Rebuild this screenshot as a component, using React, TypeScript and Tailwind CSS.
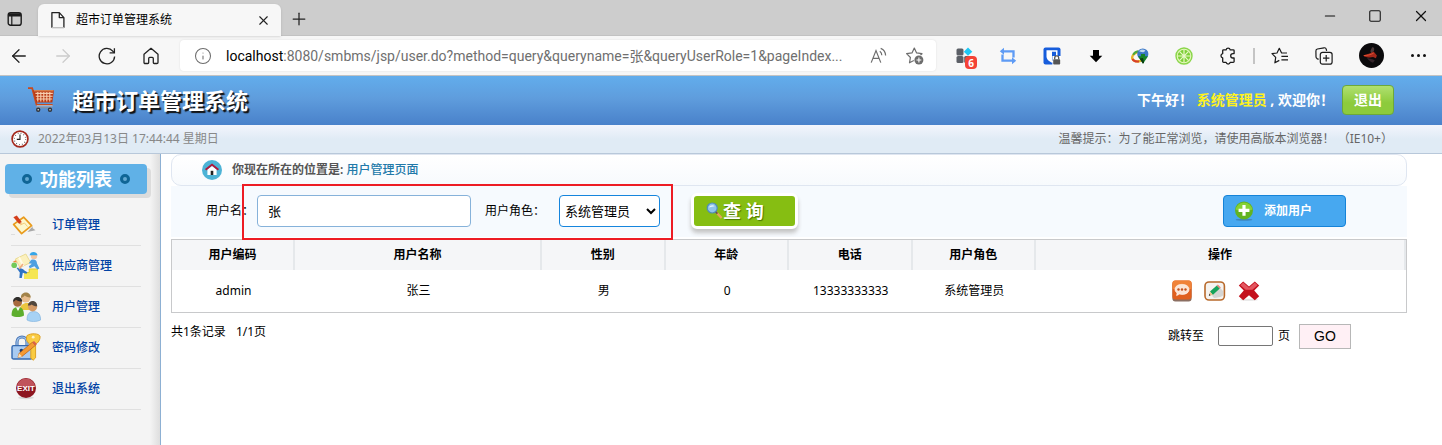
import React from 'react';
import { ArrowLeft, ArrowRight, Info, Minus, Plus, Square, X } from 'lucide-react';

const FONT = "font-['Noto_Sans','Noto_Sans_CJK_SC',sans-serif]";

type IconProps = { className?: string };

function TabsIcon() {
  return (
    <svg viewBox="0 0 16 16" className="size-4" fill="none" stroke="#1b1b1b" strokeWidth="1.4">
      <rect x="1.2" y="1.7" width="13" height="12.6" rx="2.4" />
      <path d="M1.5 3.2h12.4M1.5 4.6h12.4" strokeWidth="2" />
      <path d="M4.8 5v9" strokeWidth="1.2" />
    </svg>
  );
}

function PageIcon() {
  return (
    <svg viewBox="0 0 14 18" className="h-[18px] w-3.5" fill="none" stroke="#222" strokeWidth="1.3" strokeLinejoin="round">
      <path d="M.9 16.7V1.6h7.4l4.6 5v10.1M8.3 1.6v5h4.6" />
      <path d="M.9 16.7h12" stroke="#bbb" />
    </svg>
  );
}

function RefreshIcon() {
  return (
    <svg viewBox="0 0 18 18" className="size-[18px]" fill="none" stroke="#222" strokeWidth="1.3">
      <path d="M16.6 9.4A7.7 7.7 0 1 1 14.8 4.2L16.1 5.6" />
      <path d="M16.4 1.2v4.7h-4.8" />
    </svg>
  );
}

function HomeIcon() {
  return (
    <svg viewBox="0 0 18 18" className="size-[18px]" fill="none" stroke="#222" strokeWidth="1.3" strokeLinejoin="round">
      <path d="M2 7.3 9 1.3l7 6v8.1a1.1 1.1 0 0 1-1.1 1.1h-2.7a.9.9 0 0 1-.9-.9v-4.2a1 1 0 0 0-1-1H7.7a1 1 0 0 0-1 1v4.2a.9.9 0 0 1-.9.9H3.1A1.1 1.1 0 0 1 2 15.4z" />
    </svg>
  );
}

function ReadAloudIcon() {
  return (
    <svg viewBox="0 0 18 18" className="size-[18px]" fill="none" stroke="#6d6d6d" strokeWidth="1.2">
      <path d="M1.2 15.6 6 3.6l4.8 12M2.8 11.4h6.4" />
      <path d="M9.8 4.3a5 5 0 0 1 2 4M10.7 1.4a8 8 0 0 1 4.9 7.2" />
    </svg>
  );
}

function StarAddIcon() {
  return (
    <svg viewBox="0 0 18 18" className="size-[18px]">
      <path d="m8.3 1.1 2.3 4.8 5.4.8-3.9 3.8.9 5.3-4.7-2.5-4.8 2.5.9-5.3L.6 6.7l5.4-.8z" fill="none" stroke="#6d6d6d" strokeWidth="1.2" strokeLinejoin="round" />
      <circle cx="12.9" cy="13" r="5.2" fill="#fff" />
      <circle cx="12.9" cy="13" r="4.5" fill="#6d6d6d" />
      <path d="M12.9 10.6v4.8M10.5 13h4.8" stroke="#fff" strokeWidth="1.1" />
    </svg>
  );
}

function GridExtensionIcon() {
  return (
    <svg viewBox="0 0 17 17" className="size-[17px]">
      <rect x=".5" y="1.5" width="7" height="7" rx="1.5" fill="#5b5f66" />
      <rect x=".5" y="9" width="7" height="7" rx="1.5" fill="#5b5f66" />
      <rect x="8.2" y="9" width="7" height="7" rx="1.5" fill="#5b5f66" />
      <path d="m12 .6 4.3 4.1L12 8.8 7.8 4.7z" fill="#1ec8f5" />
    </svg>
  );
}

function SwapIcon() {
  return (
    <svg viewBox="0 0 18 18" className="size-[18px]" fill="none" stroke="#5e9bf5" strokeWidth="2.3">
      <path d="M4 4.3h10.500v6.200M14 13.700H3.500V7.500" />
      <path d="M5 .8.8 4.300 5 7.800zM13 10.200l4.200 3.500-4.200 3.500z" fill="#5e9bf5" stroke="none" />
    </svg>
  );
}

function ShieldLockIcon() {
  return (
    <svg viewBox="0 0 18 18" className="size-[18px]">
      <rect x=".5" y=".5" width="17" height="17" rx="2" fill="#175ddc" />
      <path d="M3.5 3.2h11v6.3c0 3-2.7 4.9-5.5 6.2-2.8-1.3-5.5-3.2-5.5-6.2z" fill="#fff" />
      <path d="M9 4.7h4v5c0 1.9-1.8 3.2-4 4.3z" fill="#175ddc" />
      <rect x="9.4" y="9" width="8.6" height="9" fill="#fff" />
      <rect x="10.2" y="12.2" width="7" height="5.4" rx=".8" fill="#555" />
      <path d="M11.7 12.3v-1.4a2 2 0 0 1 4 0v1.4" fill="none" stroke="#555" strokeWidth="1.3" />
    </svg>
  );
}

function DownIcon() {
  return (
    <svg viewBox="0 0 14 14" className="size-3.5">
      <path d="M4 .9h6v5.8h3.3L7 13.2.7 6.7H4z" fill="#000" />
    </svg>
  );
}

function GlobeDownIcon() {
  return (
    <svg viewBox="0 0 18 18" className="size-[18px]">
      <ellipse cx="8" cy="9.5" rx="7" ry="4.7" fill="none" stroke="#e5b52b" strokeWidth="2.4" transform="rotate(-18 8 9.5)" />
      <path d="M1.5 11.8c.8 2.2 3.5 3 6.5 2.7" fill="none" stroke="#d8402a" strokeWidth="2" />
      <path d="M2.2 7.7c1-2 3-3.2 5-3.5" fill="none" stroke="#4ba83a" strokeWidth="2" />
      <circle cx="11.8" cy="7" r="5.6" fill="#3b77c7" />
      <path d="M8 4.2c1.8-2.2 4.5-2 6.4-.8-.7 1.6-2.5 2-4 1.6z" fill="#bfd9ee" />
      <path d="M7 9.200h3V7h4v2.200h3l-5 7.600z" fill="#15822a" />
      <path d="m8.600 11.600 3.400 5.200 1-1.600-1-4.200z" fill="#083c10" />
    </svg>
  );
}

function LimeIcon() {
  return (
    <svg viewBox="0 0 18 18" className="size-[18px]">
      <circle cx="9" cy="9" r="8" fill="#e6f7bd" stroke="#8ad64a" strokeWidth="1.4" />
      <circle cx="9" cy="9" r="6.2" fill="#7ed037" />
      <path d="M9 2.5v13M2.5 9h13M4.4 4.4l9.2 9.2M13.6 4.4l-9.2 9.2" stroke="#e9f8c8" strokeWidth="1.2" />
      <circle cx="9" cy="9" r="1.2" fill="#e9f8c8" />
    </svg>
  );
}

function PuzzleIcon() {
  return (
    <svg viewBox="0 0 18 18" className="size-[18px]" fill="none" stroke="#1b1b1b" strokeWidth="1.3" strokeLinejoin="round">
      <path d="M4.600 2.800h2.500a2.100 2.100 0 0 1 4.100 0h3a.9.9 0 0 1 .9.9v2.900h-1.200a2.200 2.200 0 0 0 0 4.400h1.200v3.500a.9.9 0 0 1-.9.9h-3a2.100 2.100 0 0 1-4.100 0H4.600a.9.9 0 0 1-.9-.9v-3.600a2.200 2.200 0 0 1 0-4.300V3.700a.9.9 0 0 1 .9-.9z" />
    </svg>
  );
}

function FavoritesIcon() {
  return (
    <svg viewBox="0 0 18 18" className="size-[18px]" fill="none" stroke="#1b1b1b" strokeWidth="1.2" strokeLinejoin="round">
      <path d="M16 6H10.6L8.3 1.3 6 6l-5 .7 3.7 3.7-.8 5.4 4.4-2.4M10.4 9.4H17M10.4 12.8H17" />
    </svg>
  );
}

function CollectionsIcon() {
  return (
    <svg viewBox="0 0 18 18" className="size-[18px]" fill="none" stroke="#1b1b1b" strokeWidth="1.2" strokeLinejoin="round">
      <path d="M3.6 12.4 2 11.6A2.3 2.3 0 0 1 1 9.5L.9 4a2 2 0 0 1 1.5-2L9 .8a2 2 0 0 1 2.3 1.5l.3 1.6" />
      <rect x="5.3" y="5.3" width="11.8" height="11.8" rx="2.2" />
      <path d="M11.2 8v6.4M8 11.2h6.4" />
    </svg>
  );
}

function Avatar() {
  return (
    <svg viewBox="0 0 25 25" className="size-[25px]">
      <circle cx="12.5" cy="12.5" r="12.5" fill="#0b0a0c" />
      <path d="M13 4.5c1.5-1 2.7.5 2 3l-2.6 3.2-1-2.6z" fill="#4b3a3a" />
      <path d="M4 12.4c4-1.600 8-2 10.600-4l3.300 4.200-1 2.600-2.800-1.200c-3.400 1-7.400.4-10.100-1.600z" fill="#a5281b" />
      <path d="M8 14.8c2.8 1.3 6 1 7.8 2.7l-1.8 2.3c-2.6-.8-4.8-2.6-6-5z" fill="#34242a" />
      <path d="M5 12.6c3 0 6.4-.8 9.6-2.4" stroke="#e25534" strokeWidth=".9" fill="none" />
    </svg>
  );
}

function CartIcon() {
  return (
    <svg viewBox="0 0 26 26" className="size-[26px]">
      <path d="M0 1.2h4.2l4.4 16.6h16" fill="none" stroke="#c94a1c" strokeWidth="1.8" />
      <path d="M8.6 18.8h16" stroke="#bcc4cc" strokeWidth="1.2" />
      <path d="M5 3.2h21l-1.6 12.4H8.2z" fill="#b93a16" />
      <path d="M6 3.8h19.4" stroke="#e28b52" strokeWidth="1.2" />
      <path d="M7.4 6.4h17.4M7.8 9.2h16.8M8.4 12h15.8M9.8 5v9.6M12.8 5v9.6M15.8 5v9.6M18.8 5v9.6M21.8 5v9.6" stroke="#f7cfae" strokeWidth="1.1" />
      <path d="M8 20.6h16" stroke="#8892a0" strokeWidth="1.4" />
      <circle cx="10.2" cy="22.8" r="2.2" fill="#303640" />
      <circle cx="22" cy="22.8" r="2.2" fill="#303640" />
      <circle cx="10.2" cy="22.8" r=".8" fill="#ddd" />
      <circle cx="22" cy="22.8" r=".8" fill="#ddd" />
    </svg>
  );
}

function ClockIcon() {
  return (
    <svg viewBox="0 0 18 18" className="size-[18px]">
      <circle cx="9" cy="9" r="7.9" fill="#fff" stroke="#a4281c" strokeWidth="1.7" />
      <circle cx="9" cy="9" r="5.7" fill="none" stroke="#555" strokeWidth="1.2" strokeDasharray=".8 2.180" />
      <path d="M9 4.4v5H5.8" fill="none" stroke="#222" strokeWidth="1.1" />
    </svg>
  );
}

function OrderIcon() {
  return (
    <svg viewBox="0 0 30 30" className="size-[30px]">
      <path d="M16 22.5 22 16l-.5 2 3 2.200-8 1.800z" fill="#a9a9a9" />
      <path d="M0 24.500h4M25 24.500h5" stroke="#ddd" />
      <path d="m2.600 14.400 10-7.200 8 8.400L10.600 23.600z" fill="#fdf7cb" stroke="#e99b1d" strokeWidth="1.7" strokeLinejoin="round" />
      <path d="m9 15 4.500-2 3 3.600" fill="none" stroke="#f4cf7a" strokeWidth="1" />
      <path d="m2.400 7.200 3.400-1.800 4.600 6.200.2 2.600-2.800-.8z" fill="#d43d1a" />
      <path d="m8.600 13.300 2.200-1.500.4 2.600z" fill="#f7d29a" />
    </svg>
  );
}

function SupplierIcon() {
  return (
    <svg viewBox="0 0 30 30" className="size-[30px]">
      <path d="M13 28V21.5h5V18h9v10z" fill="#f5e653" />
      <path d="M13 21.6h5.2V18H27" fill="none" stroke="#e1c72f" />
      <path d="m4.4 8 10.4-5 4.8 8.5L9 16.6z" fill="#fbf0bd" stroke="#eadb93" />
      <path d="m8 6.4 4.6 8.5" stroke="#fffbe6" strokeWidth="2" />
      <circle cx="23" cy="5" r="3.2" fill="#f4c5a0" />
      <path d="M18.6 4.2c.3-4 6.8-4.8 8 0z" fill="#35a5e8" />
      <path d="M20 9c3.5-1.4 6 .4 6 3.4l2.4 5-2 1-3-3.2-4.6 2-1-2 3-2.4-3-.6z" fill="#4d9fe0" />
      <circle cx="3.2" cy="14.2" r="2.8" fill="#72c95b" />
      <path d="m1.6 11 3-1.8 1.6 2.4z" fill="#ef8d3a" />
      <path d="M5.4 16.8c3-.2 6 .3 8.400 3l2.600 1.400-1 1.600-3.600-1-1 5.200H8.400l.4-5.400z" fill="#2e73c4" />
      <path d="m8 18 4-5" stroke="#f0aa80" strokeWidth="1.6" />
    </svg>
  );
}

function UsersIcon() {
  return (
    <svg viewBox="0 0 30 30" className="size-[30px]">
      <path d="M9 18c0-5 3-7 7-7s7 2 7 7z" fill="#ecc53e" />
      <circle cx="14.8" cy="6" r="4.6" fill="#e8bd8e" />
      <path d="M10 6c-.8-6.6 9.6-7.6 9.8-.4-3 .2-5-1-6-2-.9 1.2-2 2-3.8 2.4z" fill="#a2834a" />
      <path d="M.6 23.6c0-5.8 2-8.6 6.4-8.6s6 3 6 8.6c-3.7 2-9 2-12.4 0z" fill="#5eae2e" />
      <path d="M5 15.2 7 19l2-3.8z" fill="#fff" />
      <circle cx="6.6" cy="10.4" r="4.4" fill="#a76b3f" />
      <path d="M2 9.8c0-6.6 9.4-6.2 9.2-.2-2.8 0-5-.9-6.4-1.8-.6 1-1.4 1.8-2.8 2z" fill="#2f2d2b" />
      <path d="M16 28c0-5.6 2-8.4 6.6-8.4s7 2.8 7 8.4c-4 2-10 2-13.6 0z" fill="#a7d2f5" stroke="#7aaedb" strokeWidth=".6" />
      <circle cx="21.6" cy="14.8" r="4.6" fill="#d49a67" />
      <path d="M16.8 13.6c.8-6.6 9.6-6 9.4.6-2.8 0-4.2-.6-5.4-1.8-1 .8-2.4 1.2-4 1.2z" fill="#51463c" />
    </svg>
  );
}

function PasswordIcon() {
  return (
    <svg viewBox="0 0 30 30" className="size-[30px]">
      <path d="M6 14V9a5 5 0 0 1 10 0v5" fill="none" stroke="#4b78b8" strokeWidth="3.2" />
      <path d="M6 14V9a5 5 0 0 1 10 0v5" fill="none" stroke="#a6c7ec" strokeWidth="1.2" />
      <rect x="1" y="12.6" width="20" height="13.4" rx="1.6" fill="#a9cbf2" stroke="#3569b0" strokeWidth="1.4" />
      <circle cx="10.4" cy="17.6" r="1.8" fill="#173d75" />
      <path d="M9.6 18h1.8v4.4H9.6z" fill="#173d75" />
      <path d="M16 2.6c4-2.8 12-2.2 13 .6.6 3-2 7-4.4 8v13.6l-2.4 2.4-2.4-2V11.6C15.6 9.6 14.6 5.6 16 2.6z" fill="#f9cb42" stroke="#d99a1a" strokeWidth=".9" />
      <circle cx="22.2" cy="4.2" r="1.4" fill="#fff2c0" />
      <path d="m7 24.4 1-4 13.4-11.2 3 3.2L11 23.4z" fill="#f49a34" stroke="#b55d16" strokeWidth=".7" />
      <path d="m21.4 9.2 1.6-1.2 3 3-1.6 1.4z" fill="#d8604d" />
      <path d="m7 24.4 1-4 3 3z" fill="#fae2bb" />
    </svg>
  );
}

function ExitIcon() {
  return (
    <svg viewBox="0 0 30 30" className="size-[30px]">
      <ellipse cx="15" cy="23.8" rx="8" ry="1.4" fill="#d9d9d9" />
      <circle cx="15" cy="14" r="10" fill="#8d1620" />
      <path d="M5.800 12a9.400 9.400 0 0 1 18.400 0c-5 2-13 2-18.400 0z" fill="#c0535b" />
      <text x="15" y="17" textAnchor="middle" fontSize="8" fontWeight="700" fontFamily="Liberation Sans Narrow, Liberation Sans" fill="#fff">EXIT</text>
    </svg>
  );
}

function LocationIcon() {
  return (
    <svg viewBox="0 0 20 20" className="size-5">
      <circle cx="10" cy="10" r="10" fill="#4db3d6" />
      <path d="M5.4 9.6 10 6l4.6 3.6V15H5.4z" fill="#fff" />
      <path d="M3.6 9.8 10 4.6l6.4 5.2" fill="none" stroke="#b3173a" strokeWidth="1.9" />
      <path d="M8.7 10.8h2.6V15H8.7z" fill="#222" />
    </svg>
  );
}

function SearchIcon() {
  return (
    <svg viewBox="0 0 17 17" className="size-[17px]">
      <path d="m10 10 5.6 6" stroke="#e3a35a" strokeWidth="2.400" />
      <path d="m9.4 9.6 2 2" stroke="#6b5745" strokeWidth="2" />
      <circle cx="6.2" cy="6" r="5" fill="#8fc4ea" stroke="#4f8cb8" strokeWidth="1.2" />
      <path d="M3 5.4c.8-2.2 3.8-3 5.8-1.2-1.8.2-3.8.6-5.8 1.2z" fill="#e5f4fd" />
    </svg>
  );
}

function AddIcon() {
  return (
    <svg viewBox="0 0 20 20" className="size-5">
      <ellipse cx="10" cy="18.8" rx="8.4" ry="1" fill="#3f86bd" />
      <circle cx="10" cy="9.4" r="9" fill="#62b321" />
      <path d="M1.6 8.6a8.5 8.5 0 0 1 16.8 0c-5 2-12 2-16.8 0z" fill="#86d136" />
      <path d="M10 4v10.8M4.6 9.4h10.8" stroke="#fff" strokeWidth="3.2" />
    </svg>
  );
}

function ViewIcon() {
  return (
    <svg viewBox="0 0 20 22" className="h-[22px] w-5">
      <rect x=".4" y="2" width="19.2" height="19.6" rx="3" fill="#8b6f62" />
      <rect x=".4" y=".4" width="19.2" height="19" rx="3" fill="#e0601f" />
      <path d="M.4 9V3.4a3 3 0 0 1 3-3h13.2a3 3 0 0 1 3 3V9z" fill="#f08238" />
      <path d="M10 4.400c4.200 0 7 2 7 5s-2.800 5-7 5c-.8 0-1.600-.1-2.400-.3L4.600 15.600l.5-2.600C3.800 12.100 3 10.800 3 9.400c0-3 2.800-5 7-5z" fill="#fbe4d6" stroke="#fff" strokeWidth=".6" />
      <circle cx="6.500" cy="9.500" r="1.200" fill="#c4501c" />
      <circle cx="10" cy="9.500" r="1.200" fill="#c4501c" />
      <circle cx="13.500" cy="9.500" r="1.200" fill="#c4501c" />
    </svg>
  );
}

function EditIcon() {
  return (
    <svg viewBox="0 0 22 20" className="h-5 w-[22px]">
      <rect x="1" y="1" width="19.4" height="18" rx="4" fill="#f5f3f0" stroke="#b8692b" strokeWidth="1.6" />
      <path d="m8 14.8 8-8 3 3.2v4.6c-2.4 2-6 2-9 2.4z" fill="#d5d5d3" />
      <path d="m6 10.6 6.8-6 3 3-7 6.400z" fill="#17a35a" />
      <path d="m12.8 4.6 1-1 3 3-1 1z" fill="#e8857c" />
      <path d="m6 10.6 2.8 3.4-3.8.8z" fill="#f0c48c" />
      <path d="m5.6 12.6.8 1.8-1.600.4z" fill="#222" />
    </svg>
  );
}

function DeleteIcon() {
  return (
    <svg viewBox="0 0 22 20" className="h-5 w-[22px]">
      <ellipse cx="11" cy="18.8" rx="9" ry="1" fill="#e4e4e4" />
      <path d="M5.200.6 11 5.400 16.800.6l4.400 4-5 5 5 5.600-4.400 4L11 14.200l-5.800 5L.8 15.200l5-5.600-5-5z" fill="#c4111d" />
      <path d="M5.200 1.600 11 6.800l5.800-5.200 2.800 2.600-5.200 4.600H7.600L2.400 4.200z" fill="#e35660" />
    </svg>
  );
}

const extensionButtons = [
  { label: '同步', icon: <SwapIcon /> },
  { label: '密码库', icon: <ShieldLockIcon /> },
  { label: '下载', icon: <DownIcon /> },
  { label: '下载管理器', icon: <GlobeDownIcon /> },
  { label: '青柠', icon: <LimeIcon /> },
  { label: '扩展', icon: <PuzzleIcon /> },
];

function Browser() {
  return (
    <div className="bg-[#f7f7f7]">
      <div className="flex h-9 items-end justify-between border-b border-[#c2c2c2] bg-[#cdcdcd]">
        <div className="flex h-full items-end">
          <button aria-label="标签页操作" className="mb-2 ml-[7px] mr-[15px]"><TabsIcon /></button>
          <div className="-mb-px flex h-8 w-[243px] items-center rounded-t-md bg-[#f7f7f7] pl-[13px] pr-2.5 shadow-sm">
            <PageIcon />
            <span className="ml-[11px] flex-1 text-xs text-black">超市订单管理系统</span>
            <button aria-label="关闭标签页"><X className="size-[15px]" strokeWidth={1.8} color="#222" /></button>
          </div>
          <button aria-label="新建标签页" className="mb-[6px] ml-2"><Plus className="size-5" strokeWidth={1.5} color="#222" /></button>
        </div>
        <div className="flex h-full items-center gap-[30px] pb-1 pr-3">
          <button aria-label="最小化"><Minus className="size-4" strokeWidth={1.6} color="#111" /></button>
          <button aria-label="最大化"><Square className="size-[14px]" strokeWidth={1.8} color="#111" /></button>
          <button aria-label="关闭"><X className="size-[18px]" strokeWidth={1.6} color="#111" /></button>
        </div>
      </div>
      <div className="flex h-10 items-center border-b border-[#c3c3c3]">
        <nav className="flex items-center gap-[26px] pl-2.5 pr-5">
          <button aria-label="后退"><ArrowLeft className="size-[18px] scale-120" strokeWidth={1.4} color="#222" /></button>
          <button aria-label="前进"><ArrowRight className="size-[18px] scale-120" strokeWidth={1.4} color="#ccc" /></button>
          <button aria-label="刷新"><RefreshIcon /></button>
          <button aria-label="主页"><HomeIcon /></button>
        </nav>
        <div className="mr-[6px] flex h-[31px] min-w-0 flex-1 items-center rounded bg-white pl-[14px] pr-3 shadow-[0_0_2px_#ddd]">
          <Info className="size-[18px] shrink-0" strokeWidth={1.4} color="#6d6d6d" />
          <div role="textbox" aria-label="地址栏" className="ml-3.5 min-w-0 flex-1 truncate font-['Roboto','Noto_Sans_CJK_SC',sans-serif] text-sm text-[#6f6f6f]">
            <span className="text-black">localhost</span>:8080/smbms/jsp/user.do?method=query&amp;queryname=张&amp;queryUserRole=1&amp;pageIndex...
          </div>
          <div className="flex shrink-0 gap-[18px]">
            <button aria-label="朗读此页"><ReadAloudIcon /></button>
            <button aria-label="添加到收藏夹"><StarAddIcon /></button>
          </div>
        </div>
        <div className="flex shrink-0 items-center pr-0.5">
          <button aria-label="扩展通知" className="relative flex w-11 justify-center">
            <GridExtensionIcon />
            <span className="absolute left-[23px] top-[9px] flex h-[13px] w-3 items-center justify-center rounded-sm bg-[#f44336] text-[10px] leading-3 font-bold text-white">6</span>
          </button>
          {extensionButtons.map((b) => (
            <button key={b.label} aria-label={b.label} className="flex w-11 justify-center">{b.icon}</button>
          ))}
          <div className="mx-[3px] h-4 w-0.5 bg-[#c4c4c4]" />
          <button aria-label="收藏夹" className="flex w-11 justify-center"><FavoritesIcon /></button>
          <button aria-label="集锦" className="flex w-11 justify-center"><CollectionsIcon /></button>
          <button aria-label="个人资料" className="flex w-[50px] justify-center"><Avatar /></button>
          <button aria-label="设置及其他" className="flex w-11 items-center justify-center gap-[3px]">
            <span className="size-[3px] rounded-full bg-[#111]" />
            <span className="size-[3px] rounded-full bg-[#111]" />
            <span className="size-[3px] rounded-full bg-[#111]" />
          </button>
        </div>
      </div>
    </div>
  );
}

const menu: { label: string; Icon: (p: IconProps) => React.ReactElement }[] = [
  { label: '订单管理', Icon: OrderIcon },
  { label: '供应商管理', Icon: SupplierIcon },
  { label: '用户管理', Icon: UsersIcon },
  { label: '密码修改', Icon: PasswordIcon },
  { label: '退出系统', Icon: ExitIcon },
];

function Sidebar() {
  const ring = <span className="size-2.5 rounded-full border-[3px] border-[#0f6596] bg-[#64a9d2]" />;
  return (
    <aside className="w-[161px] shrink-0 border-r border-[#8db0d3] bg-[linear-gradient(to_right,#f4f4f4_150px,#dedede)] pt-2.5">
      <h2 className="ml-[5px] flex h-[30px] w-[142px] items-center justify-center gap-2 rounded bg-[#60b1e7] text-lg font-bold text-white shadow-[4px_4px_0_#dcdcdc]">
        {ring}
        <span>功能列表</span>
        {ring}
      </h2>
      <ul className="ml-[11px] mt-[11px] w-[130px]">
        {menu.map(({ label, Icon }) => (
          <li key={label} className="border-b border-[#e0e0e0]">
            <a href="#" className="flex h-10 items-center gap-[11px] text-xs font-medium text-[#0042a4]">
              <Icon />
              {label}
            </a>
          </li>
        ))}
      </ul>
    </aside>
  );
}

const columns = [
  { label: '用户编码', width: 'w-[10%]' },
  { label: '用户名称', width: 'w-[20%]' },
  { label: '性别', width: 'w-[10%]' },
  { label: '年龄', width: 'w-[10%]' },
  { label: '电话', width: 'w-[10%]' },
  { label: '用户角色', width: 'w-[10%]' },
  { label: '操作', width: 'w-[30%]' },
];

const users = [['admin', '张三', '男', '0', '13333333333', '系统管理员']];

function Content() {
  return (
    <main className="min-w-0 flex-1 bg-white pl-2.5 pr-[35px] text-xs text-black">
      <div className="flex h-8 items-center gap-2.5 rounded-[10px] border border-[#dfe6f1] bg-linear-to-b from-white to-[#f7fafd] pl-[30px]">
        <LocationIcon />
        <p className="font-semibold text-[#555]">
          你现在所在的位置是: <span className="font-medium text-[#2179a9]">用户管理页面</span>
        </p>
      </div>

      <form className="relative flex h-[51px] items-center bg-[#f6fafe] pb-0.5 pl-[35px] pr-[61px]" onSubmit={(e) => e.preventDefault()}>
        <label htmlFor="queryname" className="w-[51px] whitespace-nowrap">用户名：</label>
        <input id="queryname" defaultValue="张" className="h-8 w-[214px] rounded border border-[#86b2da] bg-white px-2.5 text-[13px]" />
        <label htmlFor="queryUserRole" className="ml-3.5 w-[74px]">用户角色：</label>
        <select id="queryUserRole" className="h-8 w-[101px] rounded border border-[#1585dd] bg-white px-px text-[13px]">
          <option>系统管理员</option>
        </select>
        <button type="submit" className="ml-[31px] flex h-9 w-[107px] items-center rounded-md border-[3px] border-white bg-[#86be12] pl-3 text-lg font-bold text-white shadow-[0_4px_4px_#c4c4c4] text-shadow-[1px_1px_1px_#4d7a00]">
          <SearchIcon />
          查 询
        </button>
        <a href="#" className="ml-auto flex h-8 w-[123px] items-center gap-2.5 rounded border border-[#1583d8] bg-[#47a8f0] pl-2.5 font-bold text-white">
          <AddIcon />
          添加用户
        </a>
        <div className="pointer-events-none absolute -top-0.5 left-[71px] h-14 w-[431px] border-2 border-[#ed1c24]" />
      </form>

      <table className="mt-0.5 w-full table-fixed border-collapse border border-[#c8c9cb] text-center">
        <thead>
          <tr className="bg-[#f5f6f8]">
            {columns.map((c) => (
              <th key={c.label} className={`${c.width} p-0 font-bold`}>
                <div className="flex h-[30px] items-center justify-center border-r-2 border-[#e5e8eb]">{c.label}</div>
              </th>
            ))}
          </tr>
        </thead>
        <tbody>
          {users.map((row) => (
            <tr key={row[0]} className="h-[42px]">
              {row.map((cell) => (
                <td key={cell} className="p-0">{cell}</td>
              ))}
              <td className="p-0">
                <div className="flex items-center justify-center gap-3 pr-2.5">
                  <a href="#" aria-label="查看"><ViewIcon /></a>
                  <a href="#" aria-label="修改"><EditIcon /></a>
                  <a href="#" aria-label="删除"><DeleteIcon /></a>
                </div>
              </td>
            </tr>
          ))}
        </tbody>
      </table>

      <div className="mt-[11px] flex items-start justify-between pr-14">
        <p className="flex gap-2.5">
          <span>共1条记录</span>
          <span>1/1页</span>
        </p>
        <div className="flex items-center">
          <label htmlFor="inputPage">跳转至</label>
          <input id="inputPage" className="ml-3.5 mr-[5px] h-5 w-[55px] rounded-xs border border-[#767676] bg-white px-1" />
          <span>页</span>
          <button className="ml-[9px] h-[25px] w-[52px] border border-[#b7b7b7] bg-[#fff0f5] font-['Liberation_Sans',sans-serif] text-sm">GO</button>
        </div>
      </div>
    </main>
  );
}

export default function App() {
  return (
    <div className={`flex min-h-screen flex-col ${FONT}`}>
      <Browser />
      <header>
        <div className="flex h-[49px] items-center justify-between bg-[linear-gradient(to_bottom,#62adec,#5f9ddd_45%,#4981ca)] pb-0.5 pl-7 pr-12">
          <div className="flex items-center gap-[18px]">
            <CartIcon />
            <h1 className="text-[22px] leading-8 font-bold text-white text-shadow-[2px_2px_1px_#111]">超市订单管理系统</h1>
          </div>
          <div className="flex items-center text-sm font-bold text-white">
            <p>下午好！ <span className="text-[#fff21d]">系统管理员</span> , 欢迎你！</p>
            <button className="ml-2 h-[30px] w-[52px] rounded border border-[#6ca83a] bg-[linear-gradient(to_bottom,#b0e070,#8dcb3c_60%)]">退出</button>
          </div>
        </div>
        <div className="flex h-[29px] items-center justify-between border-b border-[#b8c8da] bg-[linear-gradient(to_bottom,#f3f5fc,#e0ebf5_50%)] pl-[11px] pr-[49px] text-xs">
          <p className="flex items-center gap-[9px] text-[#888]">
            <ClockIcon />
            2022年03月13日 17:44:44 星期日
          </p>
          <p className="text-[#666]">温馨提示：为了能正常浏览，请使用高版本浏览器！ （IE10+）</p>
        </div>
      </header>
      <div className="flex flex-1">
        <Sidebar />
        <Content />
      </div>
    </div>
  );
}
